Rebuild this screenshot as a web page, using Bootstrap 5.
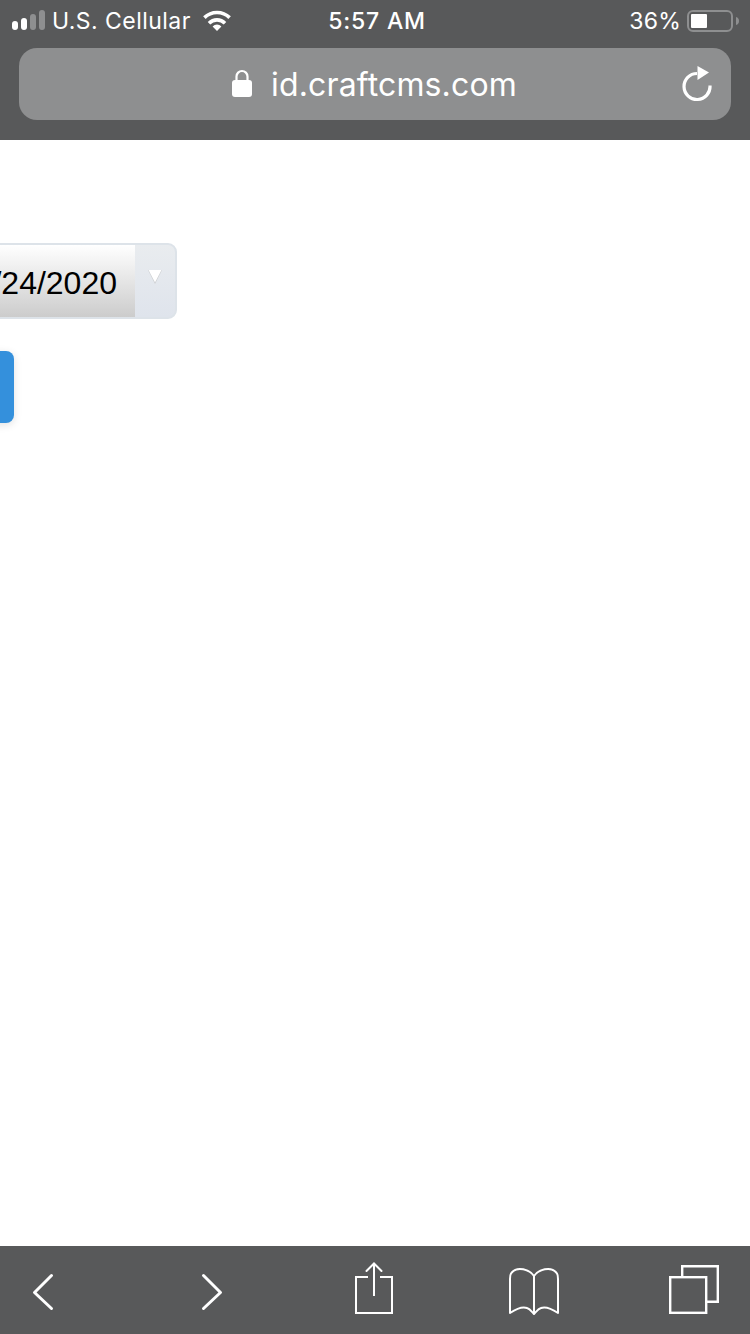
<!DOCTYPE html>
<html lang="en">
<head>
<meta charset="utf-8">
<title>id.craftcms.com</title>
<link href="https://cdn.jsdelivr.net/npm/bootstrap@5.3.0/dist/css/bootstrap.min.css" rel="stylesheet">
<style>
html,body{height:100%;margin:0;background:#fff;overflow:hidden}
.phone-page{height:1334px;width:750px;overflow:hidden;font-family:Inter,"Liberation Sans",sans-serif}
.safari-top{height:140px;background:#58595a;color:#fff;flex:none}
.status-row{height:48px;display:grid;grid-template-columns:1fr auto 1fr;align-items:start;padding:0 11px 0 12px}
.status-text{font-size:23px;line-height:28px;margin-top:7px;letter-spacing:.45px;white-space:nowrap}
.status-time{font-weight:500;margin-left:3px;letter-spacing:.8px}
.signal-bars{gap:3px;margin-top:10px;height:20px;width:33px;margin-right:7px}
.sig{width:6px;border-radius:3px;background:#fff}
.sig-1{height:9px}.sig-2{height:12px}
.sig-3{height:16px;background:#8e8f90}.sig-4{height:20px;background:#8e8f90}
.wifi-icon{margin:10px 0 0 12px}
.battery-wrap{margin-left:6px;margin-top:10px}
.battery-text{letter-spacing:.2px}
.url-pill{height:72px;margin:0 19px;background:#8e8f90;border-radius:18px;padding:0 19px 0 213px}
.url-text{font-size:32px;line-height:40px;margin-left:19px;margin-top:1px;letter-spacing:.15px;white-space:nowrap}
.lock-icon{margin-top:-2px}
.reload-icon{margin-left:auto;margin-top:-1px}
.page-main{flex:1 1 auto;padding-top:103px;gap:32px}
.date-picker{width:237px;height:76px;margin-left:-60px;border:2px solid #dde3e9;border-radius:9px;background:linear-gradient(#e9ecef,#dfe4ec);overflow:hidden}
.date-value{width:193px;height:72px;background:linear-gradient(#fff,#ccc);color:#000;font:32px/76px "Liberation Sans",Arial,sans-serif;text-align:right;padding-right:18px;white-space:nowrap}
.date-arrow{margin:25px 0 0 13px}
.blue-action{display:block;width:114px;height:72px;margin-left:-100px;background:#3490dc;border:0;border-radius:8px;box-shadow:0 2px 8px rgba(0,0,0,.12)}
.safari-bottom{height:88px;background:#58595a;flex:none}
.tb-back{margin-left:28px}.tb-fwd{margin-left:139px}.tb-share{margin-left:127px}.tb-book{margin-left:114px}.tb-tabs{margin-left:109px}
</style>
</head>
<body>
<div class="phone-page d-flex flex-column">
  <header class="safari-top">
    <div class="status-row">
      <div class="d-flex">
        <div class="signal-bars d-flex align-items-end">
          <span class="sig sig-1"></span><span class="sig sig-2"></span><span class="sig sig-3"></span><span class="sig sig-4"></span>
        </div>
        <span class="status-text">U.S. Cellular</span>
        <svg class="wifi-icon" width="28" height="21" viewBox="0 0 28 21" fill="none" stroke="#fff" stroke-width="3.6"><path d="M1.4 7.6A18 18 0 0 1 26.6 7.6"/><path d="M6 13.2A11.4 11.4 0 0 1 22 13.2"/><path d="M9.6 16.4A6.2 6.2 0 0 1 18.4 16.4L14 21Z" fill="#fff" stroke="none"/></svg>
      </div>
      <span class="status-text status-time">5:57 AM</span>
      <div class="d-flex justify-content-end">
        <span class="status-text battery-text">36%</span>
        <svg class="battery-wrap" width="52" height="22" viewBox="0 0 52 22"><rect x="1" y="1" width="44" height="20" rx="5" fill="none" stroke="#8e8f90" stroke-width="2"/><rect x="4" y="4" width="16" height="14" rx="1" fill="#fff"/><path d="M49 7c2 .5 3 2 3 4s-1 3.500-3 4z" fill="#8e8f90"/></svg>
      </div>
    </div>
    <div class="url-pill d-flex align-items-center">
      <svg class="lock-icon" width="20" height="28" viewBox="0 0 20 28"><path d="M4.500 12V7.500a5.500 5.500 0 0 1 11 0V12" fill="none" stroke="#fff" stroke-width="2.200"/><rect x="0" y="11" width="20" height="17" rx="3" fill="#fff"/></svg>
      <span class="url-text">id.craftcms.com</span>
      <svg class="reload-icon" width="30" height="36" viewBox="0 0 30 36"><path d="M15 7.500A13 13 0 1 0 28 19.500" fill="none" stroke="#fff" stroke-width="3.200"/><path d="M15.500 0L27 6.500L15.500 14Z" fill="#fff"/></svg>
    </div>
  </header>
  <main class="page-main d-flex flex-column align-items-start">
    <div class="date-picker d-flex">
      <div class="date-value">07/24/2020</div>
      <svg class="date-arrow" width="14" height="14" viewBox="0 0 14 14"><path d="M0 0H14L7 14Z" fill="#c9cbce"/><path d="M.5 0H13.500L7 12.500Z" fill="#fff"/></svg>
    </div>
    <button class="btn blue-action" type="button" aria-label="Continue"></button>
  </main>
  <footer class="safari-bottom d-flex align-items-start">
    <svg class="tb-back" width="30" height="88" viewBox="0 0 30 88" fill="none" stroke="#fff" stroke-width="3" stroke-linecap="round" stroke-linejoin="round"><path d="M23.500 29.500L6.500 46.500L23.500 62.500"/></svg>
    <svg class="tb-fwd" width="30" height="88" viewBox="0 0 30 88" fill="none" stroke="#fff" stroke-width="3" stroke-linecap="round" stroke-linejoin="round"><path d="M6.500 29.500L23.500 46.500L6.500 62.500"/></svg>
    <svg class="tb-share" width="40" height="88" viewBox="0 0 40 88" fill="none" stroke="#fff" stroke-width="2"><path d="M14 31H2V67H38V31H26"/><path d="M20 17V50"/><path d="M12.500 25L20 17.500L27.500 25" stroke-linecap="round"/></svg>
    <svg class="tb-book" width="52" height="88" viewBox="0 0 52 88" fill="none" stroke="#fff" stroke-width="2" stroke-linejoin="round"><path d="M26 30C22 24 9 19 3 27.500C2 29 2 31 2 33V67C8 63 14 60 19 62C22 63 24 66 26 68C28 66 30 63 33 62C38 60 44 63 50 67V33C50 31 50 29 49 27.500C43 19 30 24 26 30Z"/><path d="M26 30V68"/></svg>
    <svg class="tb-tabs" width="50" height="88" viewBox="0 0 50 88" fill="none" stroke="#fff" stroke-width="2.400"><rect x="1.200" y="31.200" width="36" height="35.600"/><path d="M13.200 31V20.200H48.800V55.800H38"/></svg>
  </footer>
</div>
<script src="https://cdn.jsdelivr.net/npm/bootstrap@5.3.0/dist/js/bootstrap.bundle.min.js"></script>
</body>
</html>
